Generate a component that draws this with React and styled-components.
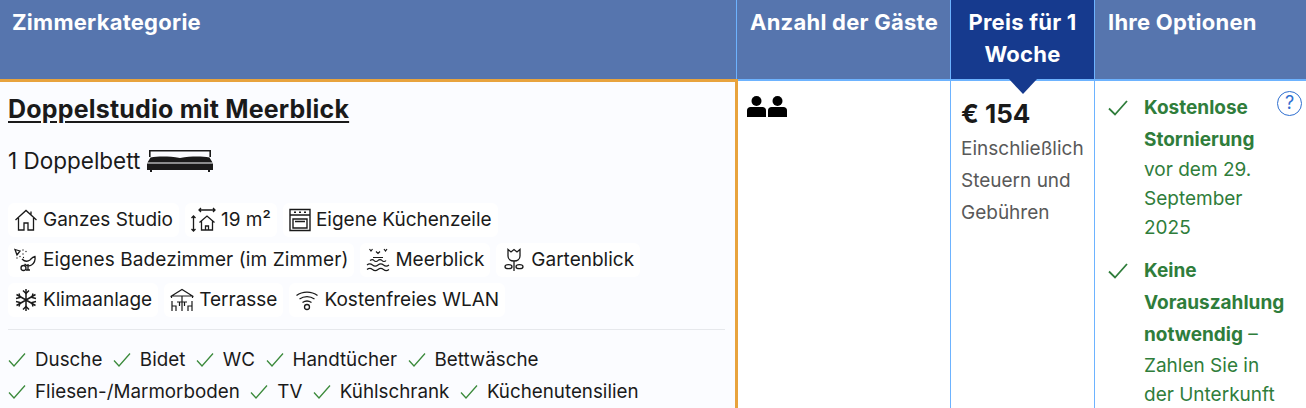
import styled, { createGlobalStyle } from "styled-components";

const GlobalStyle = createGlobalStyle`
  html, body {
    margin: 0;
    padding: 0;
    background: #fff;
    overflow: hidden;
  }
  body {
    font-family: Inter, "Liberation Sans", sans-serif;
    color: #1a1a1a;
  }
`;

const Table = styled.div`
  display: grid;
  grid-template-columns: 737px 214px 144px 211px;
  grid-template-rows: 79px 329px;
  width: 1306px;
  height: 408px;
  overflow: hidden;
`;

const HeadCell = styled.div`
  box-sizing: border-box;
  position: relative;
  height: 81px;
  padding: 6px 13px 0 ${(p) => (p.$first ? "12px" : "13px")};
  background: ${(p) => (p.$active ? "#163a8e" : "#5675ae")};
  color: #fff;
  font-size: 22px;
  font-weight: 700;
  line-height: 32px;
  letter-spacing: 0.25px;
  white-space: ${(p) => (p.$active ? "normal" : "nowrap")};
  text-align: ${(p) => (p.$active ? "center" : "left")};
  border-right: ${(p) => (p.$last ? "none" : "1px solid #6db3ff")};
  border-bottom: 2px solid #6db3ff;
`;

const Pointer = styled.span`
  position: absolute;
  left: 50%;
  bottom: -15px;
  margin-left: -14px;
  width: 0;
  height: 0;
  border-left: 14px solid transparent;
  border-right: 14px solid transparent;
  border-top: 15px solid #163a8e;
  z-index: 2;
`;

const RoomCell = styled.div`
  box-sizing: border-box;
  position: relative;
  z-index: 1;
  height: 329px;
  margin-right: -1px;
  padding: 12px 10px 0 8px;
  background: #fbfcff;
  border-top: 3px solid #e8a33d;
  border-right: 3px solid #e8a33d;
`;

const Cell = styled.div`
  box-sizing: border-box;
  position: relative;
  height: 327px;
  margin-top: 2px;
  padding: ${(p) => p.$pad};
  background: #fff;
  border-right: ${(p) => (p.$last ? "none" : "1px solid #6db3ff")};
`;

const RoomTitle = styled.a`
  display: inline-block;
  font-size: 25px;
  font-weight: 700;
  line-height: 30px;
  letter-spacing: 0.2px;
  color: #1a1a1a;
  text-decoration: underline;
  text-underline-offset: 3px;
`;

const BedRow = styled.div`
  display: flex;
  align-items: center;
  gap: 6px;
  margin-top: 21px;
  font-size: 22.5px;
  line-height: 32px;
`;

const Chips = styled.div`
  display: flex;
  flex-wrap: wrap;
  gap: 6px;
  margin-top: 26px;
`;

const Chip = styled.div`
  display: flex;
  align-items: center;
  gap: 5px;
  height: 34px;
  padding: 0 6px;
  background: #fff;
  border-radius: 6px;
  font-size: 19px;
  line-height: 24px;
  letter-spacing: ${(p) => (p.$wide ? "0.1px" : "0")};
  white-space: nowrap;
`;

const Divider = styled.div`
  height: 1px;
  background: #e6e8ec;
  margin: 12px 0 14px;
`;

const Perks = styled.div`
  display: flex;
  flex-wrap: wrap;
  column-gap: 10.500px;
`;

const Perk = styled.div`
  display: flex;
  align-items: center;
  gap: 9px;
  font-size: 18.8px;
  line-height: 32px;
  white-space: nowrap;
`;

const Price = styled.div`
  font-size: 26px;
  font-weight: 700;
  line-height: 32px;
`;

const PriceNote = styled.div`
  margin-top: 3px;
  font-size: 19px;
  line-height: 32px;
  color: #595959;
`;

const Option = styled.div`
  display: flex;
  gap: 16px;
  margin-bottom: 13px;
  color: #2f7d3b;
  font-size: 19px;
  line-height: 29px;
`;

const OptionText = styled.div`
  flex: 1;
`;

const OptionStrong = styled.strong`
  font-weight: 700;
  line-height: 32px;
`;

const OptionNote = styled.div`
  margin-top: -1px;
`;

const OptionCheck = styled.span`
  display: flex;
  align-items: center;
  height: 32px;
`;

const Help = styled.div`
  position: absolute;
  top: 10px;
  right: 4px;
  width: 25px;
  height: 25px;
  box-sizing: border-box;
  border: 1.5px solid #2f6fd0;
  border-radius: 50%;
  color: #2f6fd0;
  font-size: 18px;
  line-height: 22px;
  text-align: center;
`;

const GuestIcons = styled.div`
  display: flex;
  gap: 2px;
`;

const BedIcon = () => (
  <svg width="68" height="24" viewBox="0 0 68 24" fill="#1a1a1a">
    <path d="M3 1h62v7h-1.600V2.600H4.600V8H3z" />
    <path d="M4.500 8.500c8-1.400 18-1.400 29.500.4 11.500-1.800 21.500-1.800 29.500-.4l3 5H1.500z" />
    <path d="M1 14.500h66V21h-3v2h-2v-2H6v2H4v-2H1z" />
  </svg>
);

const HouseIcon = () => (
  <svg width="24" height="24" viewBox="0 0 24 24" fill="none" stroke="#1a1a1a" strokeWidth="1.300">
    <path d="M1.500 12 12 2.500 22.500 12M4.500 10v12h5.500v-7h4v7h5.500V10M17 3.500v3" />
  </svg>
);

const SizeIcon = () => (
  <svg width="25" height="26" viewBox="0 0 25 26" fill="none" stroke="#1a1a1a" strokeWidth="1.300">
    <path d="M8 3h16M10 1 8 3l2 2M22 1l2 2-2 2M2.500 9v15M.5 11l2-2 2 2M.5 22l2 2 2-2" />
    <path d="M8.500 15.500 16 9l7.500 6.500M10.500 14v9h11v-9M14.500 23v-4h3v4" />
  </svg>
);

const OvenIcon = () => (
  <svg width="22" height="24" viewBox="0 0 22 24" fill="none" stroke="#1a1a1a" strokeWidth="1.400">
    <path d="M1 1.500h20v21H1zM1 7h20M4 11h14v9H4zM6 13.500h10" />
    <path d="M5 4.200h2M10 4.200h2M15 4.200h2" />
  </svg>
);

const BathIcon = () => (
  <svg width="24" height="24" viewBox="0 0 24 24" fill="none" stroke="#1a1a1a" strokeWidth="1.300">
    <path d="M1 1.500 6 3 3 7zM9 2v.1M12 3.500v.1M9 6v.1M6 8.500v.1M9.500 9.500v.1M3 10v.1" strokeLinecap="round" />
    <path d="M8 11c3 3 6 2.500 8 1 1.500-1.500 2-3 5-3.500.5 3.500-.5 6.500-3.500 8.500-2.500 1.500-5 1-7-1" />
    <circle cx="9.500" cy="20" r="2.500" />
    <path d="M14 16v6M12 22h4" />
  </svg>
);

const SeaIcon = () => (
  <svg width="24" height="24" viewBox="0 0 24 24" fill="none" stroke="#1a1a1a" strokeWidth="1.200">
    <path d="M3.500 1l1.500 2 1.500-2M10 3.500l2 2 2-2M18 1l1.500 2L21 1" />
    <path d="M7 9.500h10M4 12.500c2-1.300 3-1.300 4 0s3 1.300 4 0 3-1.300 4 0 3 1.300 4 0" />
    <path d="M1 17c2-1.500 3.500-1.500 5.500 0s3.500 1.500 5.500 0 3.500-1.500 5.500 0 3.500 1.500 5.500 0" />
    <path d="M1 21.500c2-1.500 3.500-1.500 5.500 0s3.500 1.500 5.500 0 3.500-1.500 5.500 0 3.500 1.500 5.500 0" />
  </svg>
);

const FlowerIcon = () => (
  <svg width="24" height="24" viewBox="0 0 24 24" fill="none" stroke="#1a1a1a" strokeWidth="1.300">
    <path d="M6 1.500l3 2.500 3-2.500 3 2.500 3-2.500v6.500c0 3-2.500 5-6 5s-6-2-6-5zM12 13.500V23" />
    <ellipse cx="6.500" cy="18.700" rx="3.500" ry="2" />
    <ellipse cx="17.500" cy="18.700" rx="3.500" ry="2" />
  </svg>
);

const SnowIcon = () => (
  <svg width="24" height="24" viewBox="0 0 24 24" fill="none" stroke="#1a1a1a" strokeWidth="1.500">
    <path d="M12 1v22M2.500 6.500l19 11M21.500 6.500l-19 11" />
    <path d="M9 2.500l3 3 3-3M9 21.500l3-3 3 3M2 10.500l4-1-1-4M22 13.500l-4 1 1 4M22 10.500l-4-1 1-4M2 13.500l4 1-1 4" />
  </svg>
);

const TerraceIcon = () => (
  <svg width="24" height="24" viewBox="0 0 24 24" fill="none" stroke="#1a1a1a" strokeWidth="1.200">
    <path d="M1.500 8 12 1.500 22.500 8zM1.500 8v2M22.500 8v2M12 8v15" />
    <path d="M7 14h10M9.500 14v4M14.500 14v4M2 13v10M2 18h4v5M22 13v10M22 18h-4v5" />
  </svg>
);

const WifiIcon = () => (
  <svg width="24" height="24" viewBox="0 0 24 24" fill="none" stroke="#1a1a1a" strokeWidth="1.300">
    <path d="M1.500 7.500c6-4.500 15-4.500 21 0M4.500 11c4.500-3.200 10.500-3.200 15 0M7.500 14.500c3-2 6-2 9 0" />
    <circle cx="12" cy="19" r="2.500" />
  </svg>
);

const GuestIcon = () => (
  <svg width="19" height="21" viewBox="0 0 19 21" fill="#000">
    <circle cx="9.500" cy="5" r="5" />
    <path d="M0 21v-6.500c0-2 1.500-3.500 3.500-3.500h12c2 0 3.500 1.500 3.500 3.500V21z" />
  </svg>
);

const PerkCheck = () => (
  <svg width="18" height="16" viewBox="-1 0 18 16" fill="none" stroke="#3b8a3b" strokeWidth="1.300">
    <path d="M0 8.500 5 14 16 1.500" />
  </svg>
);

const OptionTick = () => (
  <svg width="20" height="16" viewBox="0 0 20 16" fill="none" stroke="#2f7d3b" strokeWidth="1.800">
    <path d="M1 8.500 7 14.500 19 1" />
  </svg>
);

const chips = [
  [<HouseIcon key="i" />, "Ganzes Studio"],
  [<SizeIcon key="i" />, "19 m²"],
  [<OvenIcon key="i" />, "Eigene Küchenzeile"],
  [<BathIcon key="i" />, "Eigenes Badezimmer (im Zimmer)", true],
  [<SeaIcon key="i" />, "Meerblick"],
  [<FlowerIcon key="i" />, "Gartenblick"],
  [<SnowIcon key="i" />, "Klimaanlage"],
  [<TerraceIcon key="i" />, "Terrasse"],
  [<WifiIcon key="i" />, "Kostenfreies WLAN"],
];

const perks = [
  "Dusche",
  "Bidet",
  "WC",
  "Handtücher",
  "Bettwäsche",
  "Fliesen-/Marmorboden",
  "TV",
  "Kühlschrank",
  "Küchenutensilien",
];

export default function App() {
  return (
    <Table>
      <GlobalStyle />
      <HeadCell $first>Zimmerkategorie</HeadCell>
      <HeadCell>Anzahl der Gäste</HeadCell>
      <HeadCell $active>
        Preis für 1 Woche
        <Pointer />
      </HeadCell>
      <HeadCell $last>Ihre Optionen</HeadCell>

      <RoomCell>
        <RoomTitle>Doppelstudio mit Meerblick</RoomTitle>
        <BedRow>
          1 Doppelbett <BedIcon />
        </BedRow>
        <Chips>
          {chips.map(([icon, label, wide]) => (
            <Chip key={label} $wide={wide}>
              {icon}
              {label}
            </Chip>
          ))}
        </Chips>
        <Divider />
        <Perks>
          {perks.map((name) => (
            <Perk key={name}>
              <PerkCheck />
              {name}
            </Perk>
          ))}
        </Perks>
      </RoomCell>

      <Cell $pad="15px 10px">
        <GuestIcons>
          <GuestIcon />
          <GuestIcon />
        </GuestIcons>
      </Cell>

      <Cell $pad="17px 10px">
        <Price>€ 154</Price>
        <PriceNote>Einschließlich Steuern und Gebühren</PriceNote>
      </Cell>

      <Cell $last $pad="11px 17px 0 13px">
        <Help>?</Help>
        <Option>
          <OptionCheck>
            <OptionTick />
          </OptionCheck>
          <OptionText>
            <OptionStrong>Kostenlose Stornierung</OptionStrong>
            <OptionNote>vor dem 29. September 2025</OptionNote>
          </OptionText>
        </Option>
        <Option>
          <OptionCheck>
            <OptionTick />
          </OptionCheck>
          <OptionText>
            <OptionStrong>Keine Vorauszahlung notwendig</OptionStrong> – Zahlen
            Sie in der Unterkunft
          </OptionText>
        </Option>
      </Cell>
    </Table>
  );
}
